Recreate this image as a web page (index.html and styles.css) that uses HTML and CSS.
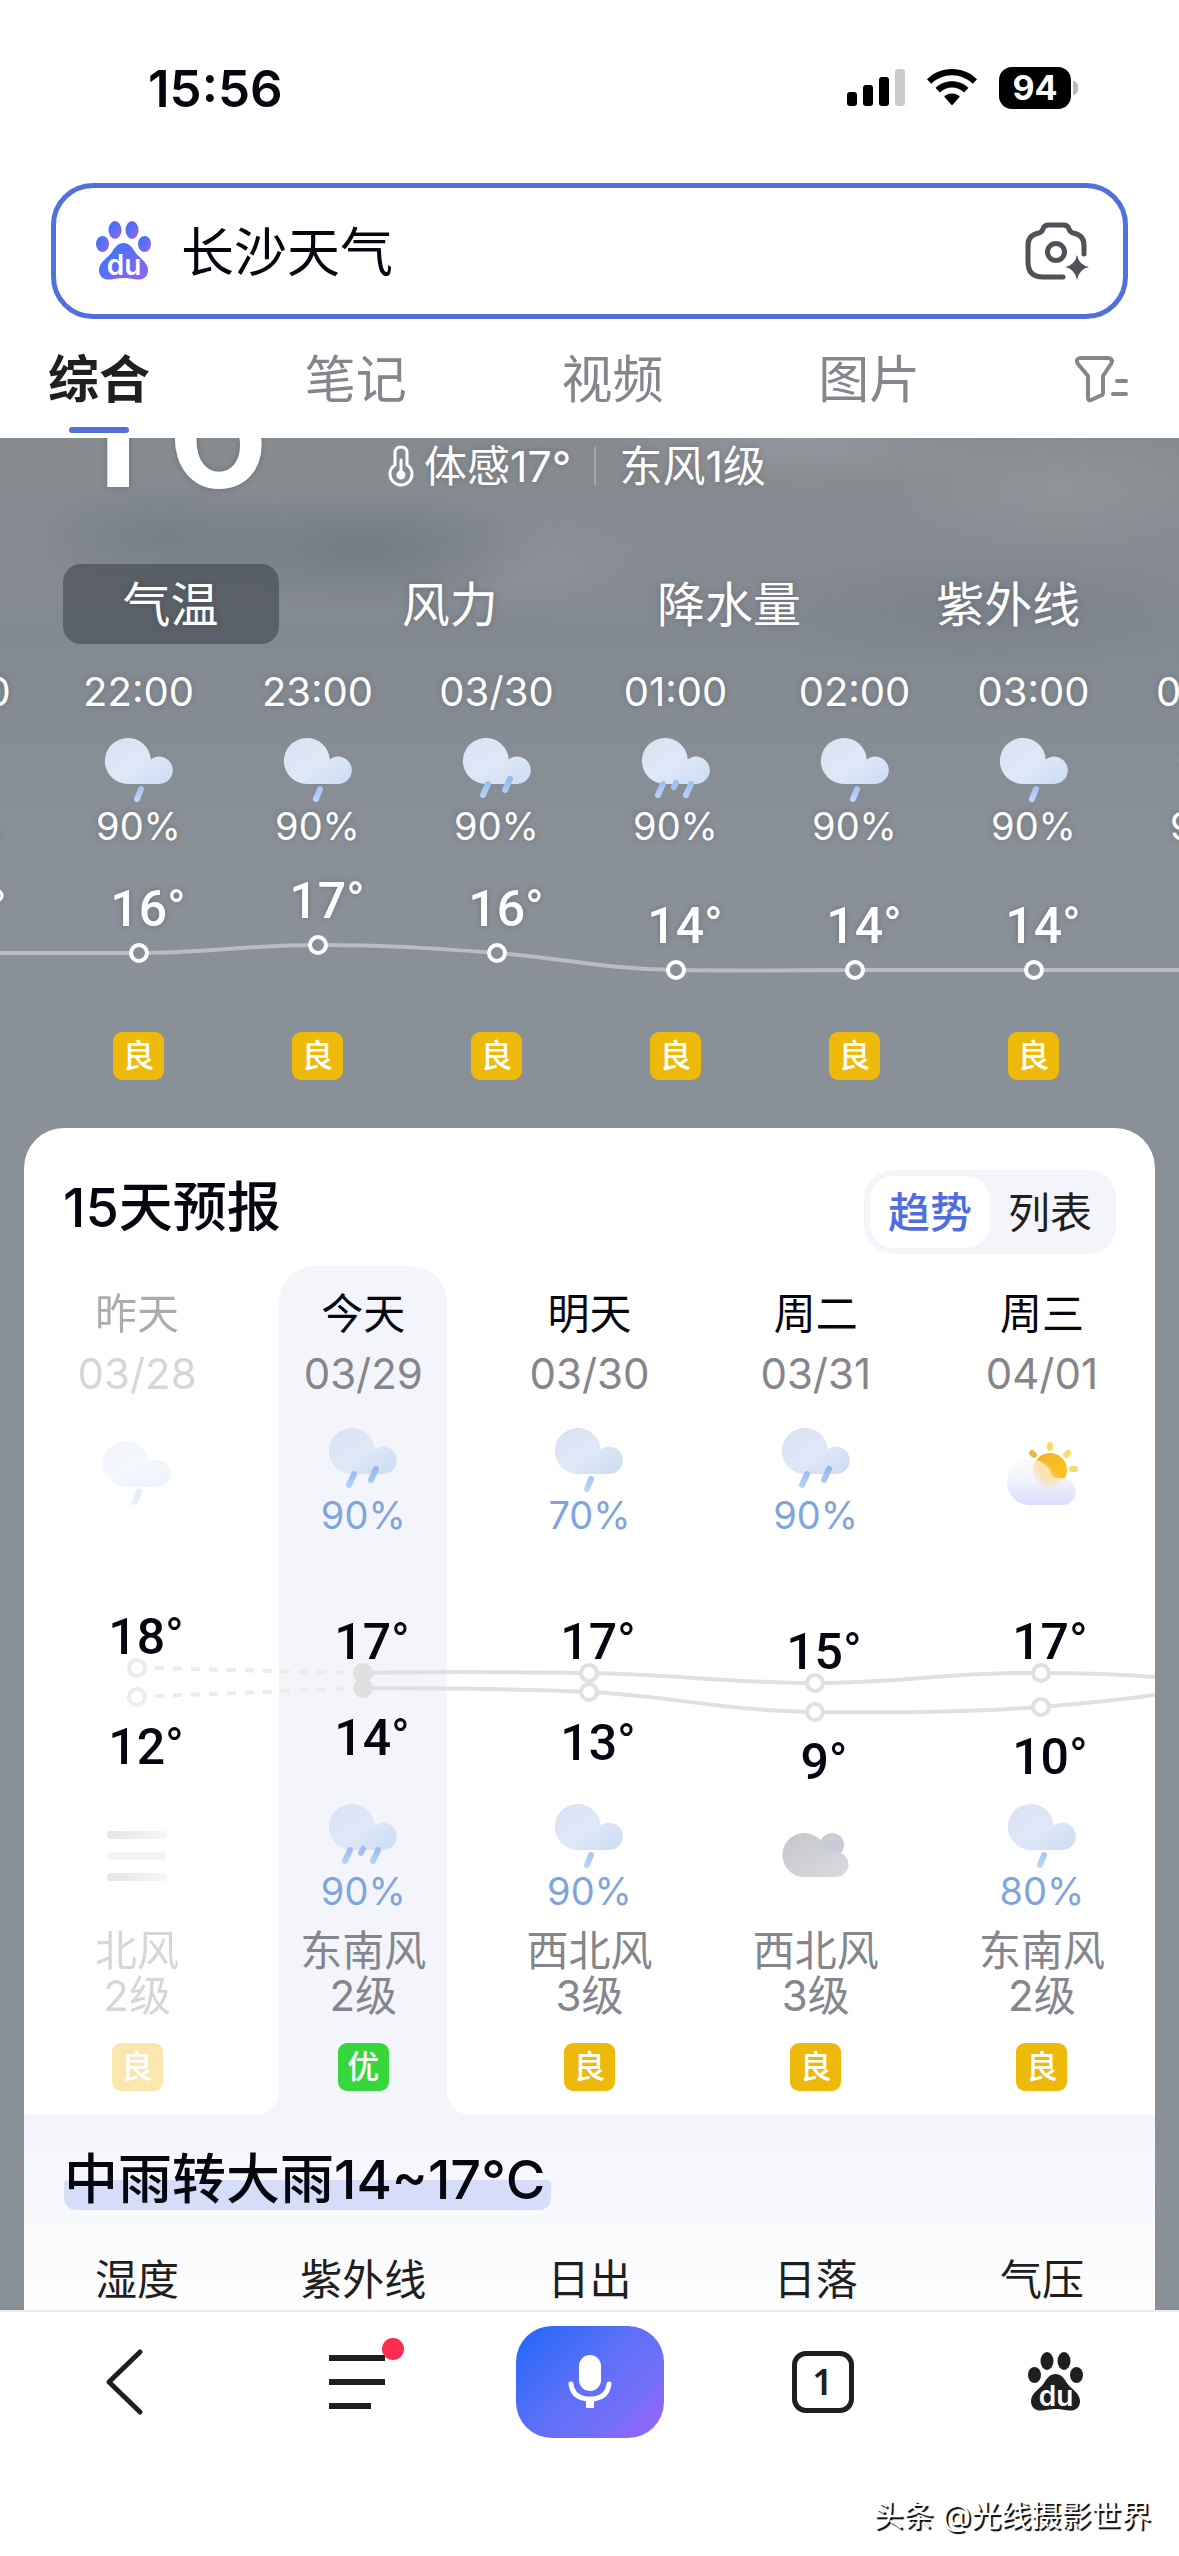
FILE: index.html
```html
<!DOCTYPE html>
<html lang="zh-CN">
<head>
  <meta charset="UTF-8">
  <meta name="viewport" content="width=device-width, initial-scale=1.0">
  <title>长沙天气</title>
  <link rel="stylesheet" href="styles.css">
</head>
<body>

  <!-- shared icons -->
  <svg class="sprite" aria-hidden="true">
    <defs>
      <linearGradient id="cloudFill" x1="0" y1="0" x2="1" y2="1">
        <stop offset="0" stop-color="#d9e0f3"/>
        <stop offset="0.5" stop-color="#dfe8f7"/>
        <stop offset="1" stop-color="#cbdcf4"/>
      </linearGradient>
      <linearGradient id="dropFill" gradientUnits="userSpaceOnUse" x1="0" y1="42" x2="0" y2="66">
        <stop offset="0" stop-color="#8fb4ee"/>
        <stop offset="1" stop-color="#bcd6fa"/>
      </linearGradient>
      <linearGradient id="sunFill" x1="0" y1="0" x2="1" y2="1">
        <stop offset="0" stop-color="#f0b02c"/>
        <stop offset="1" stop-color="#fdc914"/>
      </linearGradient>
      <linearGradient id="softCloud" x1="0" y1="0" x2="0" y2="1">
        <stop offset="0" stop-color="#fbfaf8" stop-opacity="0.75"/>
        <stop offset="0.5" stop-color="#eff0fd" stop-opacity="0.92"/>
        <stop offset="1" stop-color="#d7dcfb"/>
      </linearGradient>
      <linearGradient id="greyCloud" x1="0" y1="0" x2="1" y2="1">
        <stop offset="0" stop-color="#c6c7cc"/>
        <stop offset="1" stop-color="#d9dadd"/>
      </linearGradient>
      <linearGradient id="fogFill" x1="0" y1="0" x2="1" y2="0">
        <stop offset="0" stop-color="#e5e5e9"/>
        <stop offset="1" stop-color="#f6f6f8"/>
      </linearGradient>
      <linearGradient id="duFill" x1="0" y1="0" x2="1" y2="1">
        <stop offset="0.3" stop-color="#4b72f6"/>
        <stop offset="1" stop-color="#9a62ee"/>
      </linearGradient>
      <filter id="soft" x="-20%" y="-20%" width="140%" height="140%">
        <feGaussianBlur stdDeviation="2"/>
      </filter>
    </defs>

    <symbol id="cloud" viewBox="0 0 72 72">
      <path fill="url(#cloudFill)" d="M25 50A23 23 0 1 1 47.8 25.4A13.7 13.7 0 1 1 56 50Z"/>
    </symbol>
    <symbol id="rain-1" viewBox="0 0 72 72">
      <use href="#cloud"/>
      <path class="drop" d="M38 55l-4 10"/>
    </symbol>
    <symbol id="rain-2" viewBox="0 0 72 72">
      <use href="#cloud"/>
      <path class="drop" d="M27 50l-5 11M49 45l-5 11"/>
    </symbol>
    <symbol id="rain-3" viewBox="0 0 72 72">
      <use href="#cloud"/>
      <path class="drop" d="M23 50l-5 11M36 49l-2 4M51 50l-5 11"/>
    </symbol>
    <symbol id="sunny" viewBox="0 0 72 72">
      <circle cx="44" cy="33" r="17" fill="url(#sunFill)"/>
      <path class="ray" d="M44 8v3M62 16l-2 2M69 32h-3"/>
      <path class="ray dark" d="M26 16l2 2"/>
      <path fill="url(#softCloud)" d="M25 68A23 23 0 1 1 46 39Q48 42 56 41A13.5 13.5 0 0 1 56 68Z"/>
      <path filter="url(#soft)" fill="#fbe0a0" opacity="0.8" d="M30 24Q46 28 47 40Q51 43 55 41Q44 52 36 44Q29 34 30 24Z"/>
    </symbol>
    <symbol id="cloudy" viewBox="0 0 72 72">
      <circle cx="52" cy="26" r="12" fill="#c9ccd6"/>
      <path fill="url(#greyCloud)" d="M25 58A22 22 0 1 1 46 32Q49 34 56 33A12.500 12.500 0 0 1 56 58Z"/>
    </symbol>
    <symbol id="fog" viewBox="0 0 72 72">
      <rect x="6" y="12" width="60" height="8" rx="4" fill="url(#fogFill)"/>
      <rect x="6" y="33" width="60" height="8" rx="4" fill="#f4f4f5"/>
      <rect x="6" y="54" width="60" height="8" rx="4" fill="url(#fogFill)"/>
    </symbol>
    <symbol id="paw" viewBox="0 0 56 60">
      <ellipse cx="19" cy="9" rx="6.500" ry="9"/>
      <ellipse cx="36" cy="9" rx="6.500" ry="9"/>
      <ellipse cx="6.500" cy="23" rx="6.500" ry="8"/>
      <ellipse cx="48.500" cy="23" rx="6.500" ry="8"/>
      <path d="M27.500 22C33 22 36 26 39 31C43 37 52 41 52 49C52 56 47 59 41 58.500C35 58 32 57 27.500 57C23 57 20 58 14 58.500C8 59 3 56 3 49C3 41 12 37 16 31C19 26 22 22 27.500 22Z"/>
    </symbol>
  </svg>

  <header class="top">
    <div class="status">
      <time class="clock">15:56</time>
      <div class="status-icons">
        <svg width="58" height="38" viewBox="0 0 58 38">
          <rect x="0" y="23" width="10" height="14" rx="3"/>
          <rect x="16" y="16" width="10" height="21" rx="3"/>
          <rect x="32" y="8" width="10" height="29" rx="3"/>
          <rect x="48" y="0" width="10" height="37" rx="3" fill="#cbcbcb"/>
        </svg>
        <svg width="50" height="38" viewBox="0 0 50 38">
          <path d="M25 0C34.500 0 43.500 3.700 50 10.200L45.700 14.800C40 9.300 32.700 6.300 25 6.300S10 9.300 4.300 14.800L0 10.200C6.500 3.700 15.500 0 25 0Z"/>
          <path d="M25 12.300C31.200 12.300 37 14.600 41.400 18.900L37 23.400C33.600 20.300 29.500 18.600 25 18.600S16.400 20.300 13 23.400L8.600 18.900C13 14.600 18.800 12.300 25 12.300Z"/>
          <path d="M25 24.600C28 24.600 30.700 25.800 32.800 27.700L25 36.500L17.200 27.700C19.300 25.800 22 24.600 25 24.600Z"/>
        </svg>
        <div class="battery">94</div>
      </div>
    </div>

    <form class="search">
      <svg class="search-logo" width="56" height="60" viewBox="0 0 56 60">
        <use href="#paw" fill="url(#duFill)"/>
        <text x="28" y="54" text-anchor="middle" fill="#fff">du</text>
      </svg>
      <input class="search-input" type="text" value="长沙天气" aria-label="搜索">
      <button class="icon-button" type="button" aria-label="拍照">
        <svg width="64" height="60" viewBox="0 0 64 60" fill="none" stroke="#505159" stroke-width="5" stroke-linecap="round" stroke-linejoin="round">
          <path d="M38 56H18Q3 56 3 41V24Q3 14 14 12Q17 11 18 8Q19 4 24 4H38Q43 4 44 8Q45 11 48 12Q59 14 59 24V33"/>
          <circle cx="31" cy="31" r="8.500"/>
          <path d="M52 34Q54 44 64 46Q54 48 52 59Q50 48 40 46Q50 44 52 34Z" fill="#505159" stroke="none"/>
        </svg>
      </button>
    </form>

    <nav class="channels">
      <a class="channel active" href="#">综合</a>
      <a class="channel" href="#">笔记</a>
      <a class="channel" href="#">视频</a>
      <a class="channel" href="#">图片</a>
      <button class="icon-button" type="button" aria-label="筛选">
        <svg width="54" height="48" viewBox="0 0 54 48" fill="none" stroke="#85868d" stroke-width="4" stroke-linecap="round" stroke-linejoin="round">
          <path d="M5 3H33Q39 4 36 9L28 21V38Q28 39 27 40L16 45Q13 46 13 43V21L3 9Q0 4 5 3Z"/>
          <path d="M42 26H51M38 39H51"/>
        </svg>
      </button>
    </nav>
  </header>

  <main class="weather">
    <section class="overview">
      <div class="now-temp">16</div>
      <div class="now-detail">
        <svg width="26" height="42" viewBox="0 0 26 42" fill="none" stroke="#fff" stroke-width="3" stroke-linecap="round">
          <path d="M7 20V8Q7 2 13 2T19 8V20Q24 23 24 29A11 11 0 0 1 2 29Q2 23 7 20Z"/>
          <path d="M13 15V28"/>
          <circle cx="13" cy="30" r="3" fill="#fff"/>
        </svg>
        <span>体感17°</span>
        <i class="divider"></i>
        <span>东风1级</span>
      </div>
    </section>

    <div class="metrics">
      <button class="metric active" type="button">气温</button>
      <button class="metric" type="button">风力</button>
      <button class="metric" type="button">降水量</button>
      <button class="metric" type="button">紫外线</button>
    </div>

    <section class="hourly">
      <div class="hours">
        <div class="hour"><time>21:00</time><svg><use href="#rain-1"/></svg><span>90%</span></div>
        <div class="hour"><time>22:00</time><svg><use href="#rain-1"/></svg><span>90%</span></div>
        <div class="hour"><time>23:00</time><svg><use href="#rain-1"/></svg><span>90%</span></div>
        <div class="hour"><time>03/30</time><svg><use href="#rain-2"/></svg><span>90%</span></div>
        <div class="hour"><time>01:00</time><svg><use href="#rain-3"/></svg><span>90%</span></div>
        <div class="hour"><time>02:00</time><svg><use href="#rain-1"/></svg><span>90%</span></div>
        <div class="hour"><time>03:00</time><svg><use href="#rain-1"/></svg><span>90%</span></div>
        <div class="hour"><time>04:00</time><svg><use href="#rain-1"/></svg><span>90%</span></div>
      </div>
      <svg class="hour-chart" viewBox="0 0 1432 180">
        <path class="curve" d="M90 107H269C330 107 380 99 448 99S560 102 627 107S730 123 806 124S930 124 985 124H1432"/>
        <g class="points">
          <circle cx="90" cy="107" r="8"/>
          <circle cx="269" cy="107" r="8"/>
          <circle cx="448" cy="99" r="8"/>
          <circle cx="627" cy="107" r="8"/>
          <circle cx="806" cy="124" r="8"/>
          <circle cx="985" cy="124" r="8"/>
          <circle cx="1164" cy="124" r="8"/>
        </g>
        <g class="temps">
          <text x="99" y="80">16<tspan>°</tspan></text>
          <text x="278" y="80">16<tspan>°</tspan></text>
          <text x="457" y="72">17<tspan>°</tspan></text>
          <text x="636" y="80">16<tspan>°</tspan></text>
          <text x="815" y="97">14<tspan>°</tspan></text>
          <text x="994" y="97">14<tspan>°</tspan></text>
          <text x="1173" y="97">14<tspan>°</tspan></text>
        </g>
      </svg>
      <div class="hours">
        <div class="hour"><b class="aqi">良</b></div>
        <div class="hour"><b class="aqi">良</b></div>
        <div class="hour"><b class="aqi">良</b></div>
        <div class="hour"><b class="aqi">良</b></div>
        <div class="hour"><b class="aqi">良</b></div>
        <div class="hour"><b class="aqi">良</b></div>
        <div class="hour"><b class="aqi">良</b></div>
        <div class="hour"><b class="aqi">良</b></div>
      </div>
    </section>

    <section class="card">
      <div class="card-head">
        <h2>15天预报</h2>
        <div class="switch">
          <button class="active" type="button">趋势</button>
          <button type="button">列表</button>
        </div>
      </div>

      <div class="days">
        <div class="today-bg"></div>

        <div class="day past">
          <h3>昨天</h3><time>03/28</time>
          <div class="sky"><svg><use href="#rain-1"/></svg></div>
        </div>
        <div class="day">
          <h3>今天</h3><time>03/29</time>
          <div class="sky"><svg><use href="#rain-2"/></svg><span>90%</span></div>
        </div>
        <div class="day">
          <h3>明天</h3><time>03/30</time>
          <div class="sky"><svg><use href="#rain-1"/></svg><span>70%</span></div>
        </div>
        <div class="day">
          <h3>周二</h3><time>03/31</time>
          <div class="sky"><svg><use href="#rain-2"/></svg><span>90%</span></div>
        </div>
        <div class="day">
          <h3>周三</h3><time>04/01</time>
          <div class="sky"><svg><use href="#sunny"/></svg></div>
        </div>

        <svg class="day-chart" viewBox="0 0 1131 266">
          <g class="curve">
            <path class="dashed" d="M131 134L321 139M131 162L321 155"/>
            <path d="M339 139C420 137 480 138 565 139S700 149 791 149S920 138 1017 139Q1080 139 1131 143"/>
            <path d="M339 154C420 154 490 155 565 158S700 177 791 178S940 178 1017 173Q1080 168 1131 161"/>
          </g>
          <g class="points">
            <circle class="faded" cx="113" cy="134" r="8"/>
            <circle class="faded" cx="113" cy="163" r="8"/>
            <circle class="full" cx="339" cy="139" r="8"/>
            <circle class="full" cx="339" cy="154" r="8"/>
            <circle cx="565" cy="139" r="8"/>
            <circle cx="565" cy="158" r="8"/>
            <circle cx="791" cy="149" r="8"/>
            <circle cx="791" cy="178" r="8"/>
            <circle cx="1017" cy="139" r="8"/>
            <circle cx="1017" cy="173" r="8"/>
          </g>
          <g class="temps">
            <text x="122" y="120">18<tspan>°</tspan></text>
            <text x="122" y="230">12<tspan>°</tspan></text>
            <text x="348" y="125">17<tspan>°</tspan></text>
            <text x="348" y="221">14<tspan>°</tspan></text>
            <text x="574" y="125">17<tspan>°</tspan></text>
            <text x="574" y="226">13<tspan>°</tspan></text>
            <text x="800" y="135">15<tspan>°</tspan></text>
            <text x="800" y="245">9<tspan>°</tspan></text>
            <text x="1026" y="125">17<tspan>°</tspan></text>
            <text x="1026" y="240">10<tspan>°</tspan></text>
          </g>
        </svg>

        <div class="night past">
          <div class="sky"><svg><use href="#fog"/></svg></div>
          <p>北风<br>2级</p><b class="aqi">良</b>
        </div>
        <div class="night">
          <div class="sky"><svg><use href="#rain-3"/></svg><span>90%</span></div>
          <p>东南风<br>2级</p><b class="aqi good">优</b>
        </div>
        <div class="night">
          <div class="sky"><svg><use href="#rain-1"/></svg><span>90%</span></div>
          <p>西北风<br>3级</p><b class="aqi">良</b>
        </div>
        <div class="night">
          <div class="sky"><svg><use href="#cloudy"/></svg></div>
          <p>西北风<br>3级</p><b class="aqi">良</b>
        </div>
        <div class="night">
          <div class="sky"><svg><use href="#rain-1"/></svg><span>80%</span></div>
          <p>东南风<br>2级</p><b class="aqi">良</b>
        </div>
      </div>

      <div class="summary">
        <h2><span>中雨转大雨14~17°C</span></h2>
        <div class="facts">
          <span>湿度</span>
          <span>紫外线</span>
          <span>日出</span>
          <span>日落</span>
          <span>气压</span>
        </div>
      </div>
    </section>
  </main>

  <footer class="toolbar">
    <div class="tools">
      <button class="icon-button" type="button" aria-label="返回">
        <svg width="40" height="68" viewBox="0 0 40 68" fill="none" stroke="#1f1f1f" stroke-width="5" stroke-linecap="round" stroke-linejoin="round">
          <path d="M36 4L5 34L36 64"/>
        </svg>
      </button>
      <button class="icon-button menu" type="button" aria-label="菜单">
        <svg width="56" height="56" viewBox="0 0 56 56" fill="#1f1f1f">
          <path d="M0 1H56V7H0ZM0 25H56V31H0ZM0 49H42V55H0Z"/>
        </svg>
        <i class="dot"></i>
      </button>
      <button class="voice" type="button" aria-label="语音">
        <svg width="44" height="56" viewBox="0 0 44 56" fill="none" stroke="#fff" stroke-width="5" stroke-linecap="round">
          <rect x="11" y="1" width="22" height="36" rx="11" fill="#fff" stroke="none"/>
          <path d="M3 30Q5 45 22 45T41 30"/>
          <path d="M22 45V54" stroke-width="8" stroke-linecap="butt"/>
        </svg>
      </button>
      <button class="tab-count" type="button">1</button>
      <button class="icon-button" type="button" aria-label="首页">
        <svg width="56" height="60" viewBox="0 0 56 60">
          <use href="#paw" fill="#1f1f1f"/>
          <text x="28" y="54" text-anchor="middle" fill="#fff">du</text>
        </svg>
      </button>
    </div>
    <p class="author">头条 @光线摄影世界</p>
  </footer>

</body>
</html>
```
FILE: styles.css
```css
* {
  box-sizing: border-box;
}

body {
  margin: 0;
  background: #fff;
  color: #05060f;
  font-family: Inter, "Noto Sans CJK SC", sans-serif;
  overflow-x: hidden;
}

h2, h3, p {
  margin: 0;
}

button {
  border: none;
  padding: 0;
  background: none;
  color: inherit;
  font-family: inherit;
  cursor: pointer;
}

svg {
  display: block;
}

svg text {
  font-family: Inter, sans-serif;
  font-size: 28px;
  font-weight: 600;
}

.sprite {
  position: absolute;
  width: 0;
  height: 0;
}

.drop {
  fill: none;
  stroke: url(#dropFill);
  stroke-width: 6px;
  stroke-linecap: round;
}

.ray {
  fill: none;
  stroke: #f8dc62;
  stroke-width: 6px;
  stroke-linecap: round;
}

.ray.dark {
  stroke: #e8bb45;
}

.icon-button {
  display: flex;
  align-items: center;
  justify-content: center;
}

/* status bar, search box, channels */
.status {
  display: flex;
  justify-content: space-between;
  align-items: center;
  height: 176px;
  padding: 0 98px 0 148px;
}

.clock {
  font-size: 51px;
  font-weight: 600;
}

.status-icons {
  display: flex;
  align-items: center;
  gap: 22px;
}

.battery {
  position: relative;
  width: 72px;
  height: 42px;
  margin-right: 10px;
  border-radius: 13px;
  background: #000;
  color: #fff;
  font-size: 34px;
  font-weight: 700;
  line-height: 42px;
  text-align: center;
}

.battery::after {
  content: "";
  position: absolute;
  top: 14px;
  right: -7px;
  width: 5px;
  height: 14px;
  border-radius: 0 5px 5px 0;
  background: #bbb;
}

.search {
  display: flex;
  align-items: center;
  gap: 29px;
  height: 136px;
  margin: 7px 51px 0;
  padding: 0 34px 0 40px;
  border: 5px solid #5170dc;
  border-radius: 42px;
}

.search-input {
  flex: 1;
  min-width: 0;
  padding: 0 0 4px;
  border: none;
  outline: none;
  background: none;
  color: #05060f;
  font-family: inherit;
  font-size: 53px;
}

.channels {
  display: flex;
  justify-content: space-between;
  align-items: center;
  height: 119px;
  padding: 0 50px 0 48px;
}

.channel {
  position: relative;
  padding-top: 2px;
  color: #85868d;
  font-size: 51px;
  line-height: 117px;
  text-decoration: none;
}

.channel.active {
  color: #1f1f1f;
  font-weight: 700;
}

.channel.active::after {
  content: "";
  position: absolute;
  left: 21px;
  right: 21px;
  bottom: 5px;
  height: 6px;
  border-radius: 3px;
  background: #5170dc;
}

/* weather */
.weather {
  overflow: hidden;
  background:
    radial-gradient(ellipse 140px 60px at 165px 100px, rgba(108, 118, 128, 0.6) 0%, transparent 100%),
    radial-gradient(ellipse 190px 60px at 360px 110px, rgba(105, 115, 126, 0.7) 0%, transparent 100%),
    radial-gradient(ellipse 240px 60px at 980px 170px, rgba(118, 124, 134, 0.6) 0%, transparent 100%),
    radial-gradient(ellipse 120px 50px at 530px 130px, rgba(148, 150, 156, 0.5) 0%, transparent 100%),
    radial-gradient(ellipse 180px 60px at 1060px 50px, rgba(155, 158, 162, 0.5) 0%, transparent 100%),
    radial-gradient(ellipse 200px 40px at 800px 10px, rgba(158, 162, 168, 0.5) 0%, transparent 100%),
    linear-gradient(#868b90, #878b92 110px, #828991 200px, #8a9098 420px);
  background-color: #8a9098;
  color: #fff;
  text-shadow: 0 0 6px rgba(0, 0, 0, 0.2);
}

.overview {
  display: flex;
  align-items: flex-end;
  height: 56px;
  overflow: hidden;
}

.now-temp {
  width: 388px;
  padding-left: 60px;
  font-family: Roboto, sans-serif;
  font-size: 184px;
  font-weight: 500;
  line-height: 140px;
}

.now-detail {
  display: flex;
  align-items: center;
  gap: 10px;
  font-size: 43px;
  line-height: 56px;
}

.divider {
  width: 2px;
  height: 38px;
  margin: 0 13px;
  background: #a5a9ae;
}

.metrics {
  display: grid;
  grid-template-columns: repeat(4, 1fr);
  justify-items: center;
  margin: 70px 31px 0;
}

.metric {
  width: 216px;
  height: 80px;
  padding-bottom: 6px;
  border-radius: 18px;
  font-size: 48px;
  text-shadow: inherit;
}

.metric.active {
  background: rgba(50, 55, 62, 0.5);
}

.hourly {
  width: 1432px;
  margin: 20px 0 48px -130px;
}

.hours {
  display: grid;
  grid-template-columns: repeat(8, 1fr);
}

.hour {
  display: flex;
  flex-direction: column;
  align-items: center;
  font-size: 38px;
}

.hour time {
  font-size: 40px;
  line-height: 56px;
}

.hour svg {
  width: 72px;
  height: 72px;
  margin-top: 14px;
}

.hour span {
  line-height: 40px;
}

.hour-chart {
  width: 100%;
}

.hour-chart .curve {
  fill: none;
  stroke: #b9bcc2;
  stroke-width: 4px;
}

.hour-chart .points {
  fill: #8a9098;
  stroke: #fff;
  stroke-width: 4px;
}

.hour-chart .temps {
  fill: #fff;
}

.temps text {
  font-family: Roboto, sans-serif;
  font-size: 50px;
  font-weight: 500;
  text-anchor: middle;
}

.temps tspan {
  font-weight: 400;
}

.aqi {
  width: 51px;
  height: 48px;
  margin-top: 6px;
  border-radius: 9px;
  background: #edb90a;
  color: #fff;
  font-size: 32px;
  font-weight: 500;
  line-height: 48px;
  text-align: center;
  text-shadow: none;
}

.aqi.good {
  background: #37d63c;
}

/* 15 day forecast */
.card {
  margin: 0 24px;
  padding-top: 42px;
  border-radius: 40px 40px 0 0;
  background: #fff;
  color: #05060f;
  text-shadow: none;
  overflow: hidden;
}

.card-head {
  display: flex;
  justify-content: space-between;
  align-items: center;
  padding: 0 39px;
}

.card-head h2 {
  padding-bottom: 8px;
  font-size: 54px;
  font-weight: 500;
  line-height: 72px;
}

.switch {
  display: flex;
  padding: 6px;
  border-radius: 28px;
  background: #f4f5fa;
}

.switch button {
  width: 120px;
  height: 72px;
  padding-bottom: 5px;
  border-radius: 24px;
  color: #1f1f1f;
  font-size: 42px;
}

.switch .active {
  background: #fff;
  color: #4e6ee0;
  font-weight: 500;
}

.days {
  display: grid;
  grid-template-columns: repeat(5, 1fr);
  margin-top: 12px;
}

.today-bg {
  position: relative;
  grid-column: 2;
  grid-row: 1 / 4;
  margin: 0 29px;
  border-radius: 36px 36px 0 0;
  background: #f4f5fa;
}

/* curved feet that join the column to the summary */
.today-bg::before,
.today-bg::after {
  content: "";
  position: absolute;
  bottom: 0;
  width: 24px;
  height: 24px;
}

.today-bg::before {
  right: 100%;
  background: radial-gradient(circle at 0 0, transparent 24px, #f4f5fa 24px);
}

.today-bg::after {
  left: 100%;
  background: radial-gradient(circle at 100% 0, transparent 24px, #f4f5fa 24px);
}

.day,
.night {
  position: relative;
  display: flex;
  flex-direction: column;
  align-items: center;
}

.day {
  grid-row: 1;
  padding-top: 22px;
}

.night {
  grid-row: 3;
  padding-bottom: 24px;
}

.day:nth-child(2), .night:nth-child(8) { grid-column: 1; }
.day:nth-child(3), .night:nth-child(9) { grid-column: 2; }
.day:nth-child(4), .night:nth-child(10) { grid-column: 3; }
.day:nth-child(5), .night:nth-child(11) { grid-column: 4; }
.day:nth-child(6), .night:nth-child(12) { grid-column: 5; }

.day h3 {
  font-size: 42px;
  font-weight: 400;
  line-height: 52px;
}

.day time {
  margin-bottom: 16px;
  color: #85868d;
  font-size: 42px;
  line-height: 68px;
}

.sky {
  display: flex;
  flex-direction: column;
  align-items: center;
  justify-content: center;
  height: 110px;
}

.sky svg {
  width: 72px;
  height: 72px;
}

.day .sky svg:only-child {
  margin-bottom: 12px;
}

.sky span {
  color: #7fa6dc;
  font-size: 38px;
  line-height: 38px;
}

.night p {
  margin-top: 18px;
  color: #85868d;
  font-size: 42px;
  line-height: 45px;
  text-align: center;
}

.night .aqi {
  margin-top: 25px;
}

.past h3,
.past time,
.past p,
.past .aqi {
  opacity: 0.33;
}

.day.past svg {
  opacity: 0.33;
}

.day-chart {
  position: relative;
  grid-column: 1 / 6;
  grid-row: 2;
  width: 100%;
}

.day-chart .curve {
  fill: none;
  stroke: #e0e0e0;
  stroke-width: 4px;
}

.day-chart .dashed {
  stroke: #ececee;
  stroke-dasharray: 9 9;
}

.day-chart .points {
  fill: #fff;
  stroke: #e0e0e0;
  stroke-width: 4px;
}

.day-chart .full {
  fill: #e0e0e0;
}

.day-chart .faded {
  stroke: #ececee;
}

.day-chart .temps {
  fill: #05060f;
}

.summary {
  padding-top: 33px;
  background: linear-gradient(#f4f5fa, #fdfdfe);
}

.summary h2 {
  padding-left: 40px;
  font-size: 54px;
  font-weight: 500;
  line-height: 64px;
}

.summary h2 span {
  position: relative;
  z-index: 0;
  padding-right: 6px;
}

.summary h2 span::before {
  content: "";
  position: absolute;
  z-index: -1;
  left: 0;
  right: 0;
  bottom: 2px;
  height: 30px;
  border-radius: 4px 4px 12px 12px;
  background: #d5ddf9;
}

.facts {
  display: grid;
  grid-template-columns: repeat(5, 1fr);
  margin-top: 38px;
  color: #1f1f1f;
  font-size: 42px;
  line-height: 60px;
  text-align: center;
}

/* bottom toolbar */
.toolbar {
  border-top: 2px solid #ebecef;
}

.tools {
  display: grid;
  grid-template-columns: repeat(5, 1fr);
  align-items: center;
  justify-items: center;
  padding: 14px 7px 0;
}

.menu {
  position: relative;
}

.dot {
  position: absolute;
  top: -16px;
  right: -19px;
  width: 22px;
  height: 22px;
  border-radius: 50%;
  background: #fb2c50;
}

.voice {
  display: flex;
  align-items: center;
  justify-content: center;
  width: 148px;
  height: 112px;
  border-radius: 36px;
  background: linear-gradient(135deg, #2468fb 5%, #5b70f6 45%, #746ffa 75%, #9a64f8 95%);
}

.tab-count {
  width: 62px;
  height: 62px;
  border: 5px solid #1f1f1f;
  border-radius: 14px;
  color: #1f1f1f;
  font-family: "Noto Sans", sans-serif;
  font-size: 36px;
  font-weight: 600;
  line-height: 50px;
}

.author {
  margin: 54px 28px 0;
  color: #fff;
  font-size: 30px;
  line-height: 46px;
  text-align: right;
  text-shadow: 2px 2px 1px #000;
}
```
